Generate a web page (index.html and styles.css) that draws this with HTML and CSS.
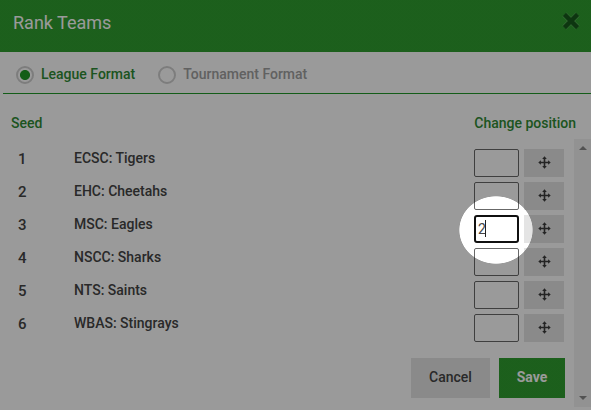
FILE: index.html
```
<!DOCTYPE html>
<html lang="en">
<head>
  <meta charset="UTF-8">
  <meta name="viewport" content="width=device-width, initial-scale=1.0">
  <title>Rank Teams</title>
  <link rel="stylesheet" href="styles.css">
</head>
<body>
  <svg width="0" height="0" class="defs">
    <symbol id="move" viewBox="0 0 13 13">
      <path d="M6.5 2v9M2 6.5h9" stroke="currentColor" stroke-width="1.6"/>
      <path d="M6.5 .3L8.8 2.9H4.2zM6.5 12.7L4.2 10.1h4.6zM.3 6.5L2.9 4.2v4.6zM12.7 6.5L10.1 8.8V4.2z" fill="currentColor"/>
    </symbol>
  </svg>

  <div class="dialog">
    <div class="dialog-header">
      <h2>Rank Teams</h2>
      <svg class="close" viewBox="0 0 20 20">
        <path class="close-edge" d="M3.4 3.4l13.2 13.2M16.6 3.4L3.4 16.6"/>
        <path class="close-cross" d="M3.4 3.4l13.2 13.2M16.6 3.4L3.4 16.6"/>
      </svg>
    </div>

    <div class="formats">
      <div class="format selected"><span class="radio"></span><span class="format-name">League Format</span></div>
      <div class="format"><span class="radio"></span><span class="format-name">Tournament Format</span></div>
    </div>

    <div class="list-head">
      <span class="head-seed">Seed</span>
      <span class="head-change">Change position</span>
    </div>

    <div class="content">
      <div class="main">
        <div class="team"><span class="seed">1</span><span class="name">ECSC: Tigers</span><span class="position"></span><span class="drag"><svg><use href="#move"/></svg></span></div>
        <div class="team"><span class="seed">2</span><span class="name">EHC: Cheetahs</span><span class="position"></span><span class="drag"><svg><use href="#move"/></svg></span></div>
        <div class="team"><span class="seed">3</span><span class="name">MSC: Eagles</span><span class="position focused">2<i class="caret"></i></span><span class="drag"><svg><use href="#move"/></svg></span></div>
        <div class="team"><span class="seed">4</span><span class="name">NSCC: Sharks</span><span class="position"></span><span class="drag"><svg><use href="#move"/></svg></span></div>
        <div class="team"><span class="seed">5</span><span class="name">NTS: Saints</span><span class="position"></span><span class="drag"><svg><use href="#move"/></svg></span></div>
        <div class="team"><span class="seed">6</span><span class="name">WBAS: Stingrays</span><span class="position"></span><span class="drag"><svg><use href="#move"/></svg></span></div>
        <div class="buttons">
          <button class="cancel">Cancel</button>
          <button class="save">Save</button>
        </div>
      </div>
      <div class="scrollbar">
        <span class="arrow-up"></span>
        <span class="arrow-down"></span>
      </div>
    </div>
  </div>

  <div class="spotlight"></div>
</body>
</html>
```

FILE: styles.css
```
* {
  box-sizing: border-box;
}
body {
  margin: 0;
  font-family: Roboto, "Liberation Sans", sans-serif;
  font-size: 14px;
  font-weight: 500;
  color: #444;
  background: #fff;
  overflow: hidden;
}
.defs {
  position: absolute;
}
.dialog {
  width: 591px;
  height: 410px;
  padding-bottom: 3px;
  display: flex;
  flex-direction: column;
}
.dialog-header {
  height: 52px;
  padding: 0 10px 0 13px;
  display: flex;
  justify-content: space-between;
  background: #2f9e2f;
}
.dialog-header h2 {
  margin: 0;
  font-size: 18px;
  font-weight: 400;
  line-height: 46px;
  color: #fff;
}
.close {
  width: 20px;
  height: 20px;
  margin-top: 11px;
  fill: none;
}
.close-edge {
  stroke: #5db35d;
  stroke-width: 5.6;
}
.close-cross {
  stroke: #15591a;
  stroke-width: 4.4;
}
.formats {
  height: 42px;
  margin-left: 3px;
  padding: 0 13px;
  display: flex;
  gap: 23px;
  border-bottom: 1px solid #1f9a28;
}
.format {
  display: flex;
  gap: 7px;
  color: #a0a0a0;
  line-height: 45px;
}
.radio {
  width: 18px;
  height: 18px;
  margin-top: 14px;
  border: 2px solid #cfcfcf;
  border-radius: 50%;
}
.selected {
  color: #2e8b34;
}
.selected .radio {
  background: radial-gradient(circle, #1f9a25 4.6px, transparent 5.4px);
}
.list-head {
  height: 45px;
  padding: 0 15px 0 11px;
  display: flex;
  justify-content: space-between;
  line-height: 59px;
  color: #2e8b34;
}
.content {
  flex: 1;
  display: flex;
}
.main {
  width: 574px;
  padding: 10px 9px 0 18px;
}
.team {
  height: 28px;
  margin-bottom: 5px;
  display: flex;
}
.seed {
  width: 56px;
  font-size: 15px;
  line-height: 20px;
}
.name {
  width: 400px;
  line-height: 18px;
}
.position {
  width: 45px;
  height: 28px;
  margin-right: 5px;
  border: 1px solid #686868;
  border-radius: 2px;
  background: #fff;
}
.focused {
  padding: 0 0 1px 2px;
  display: flex;
  align-items: center;
  border: 2px solid #101010;
  border-radius: 3px;
  font-size: 14px;
  font-weight: 400;
}
.caret {
  width: 1px;
  height: 17px;
  margin-left: -1px;
  background: #222;
}
.drag {
  width: 40px;
  height: 28px;
  padding: 7px 0 0 13.5px;
  background: #e4e4e4;
  color: #3c3c3c;
}
.drag svg {
  display: block;
  width: 13px;
  height: 13px;
}
.buttons {
  margin-top: 16px;
  display: flex;
  justify-content: flex-end;
  gap: 9px;
}
.buttons button {
  height: 40px;
  padding: 0 0 3px;
  border: none;
  font: inherit;
}
.cancel {
  width: 79px;
  background: #e4e4e4;
  color: #444;
}
.buttons .save {
  width: 66px;
  background: #2f9e2f;
  color: #fff;
  font-weight: 700;
}
.scrollbar {
  width: 17px;
  padding: 7px 0;
  display: flex;
  flex-direction: column;
  align-items: center;
  justify-content: space-between;
  background: #f1f1f1;
}
.arrow-up,
.arrow-down {
  border: 4px solid transparent;
}
.arrow-up {
  border-top: none;
  border-bottom-color: #888;
}
.arrow-down {
  border-bottom: none;
  border-top-color: #888;
}
/* dims the page around the field being edited */
.spotlight {
  position: absolute;
  inset: 0;
  background: radial-gradient(37px 34px at 496px 230px, transparent 98%, rgba(0, 0, 0, 0.395) 100%);
}
```
